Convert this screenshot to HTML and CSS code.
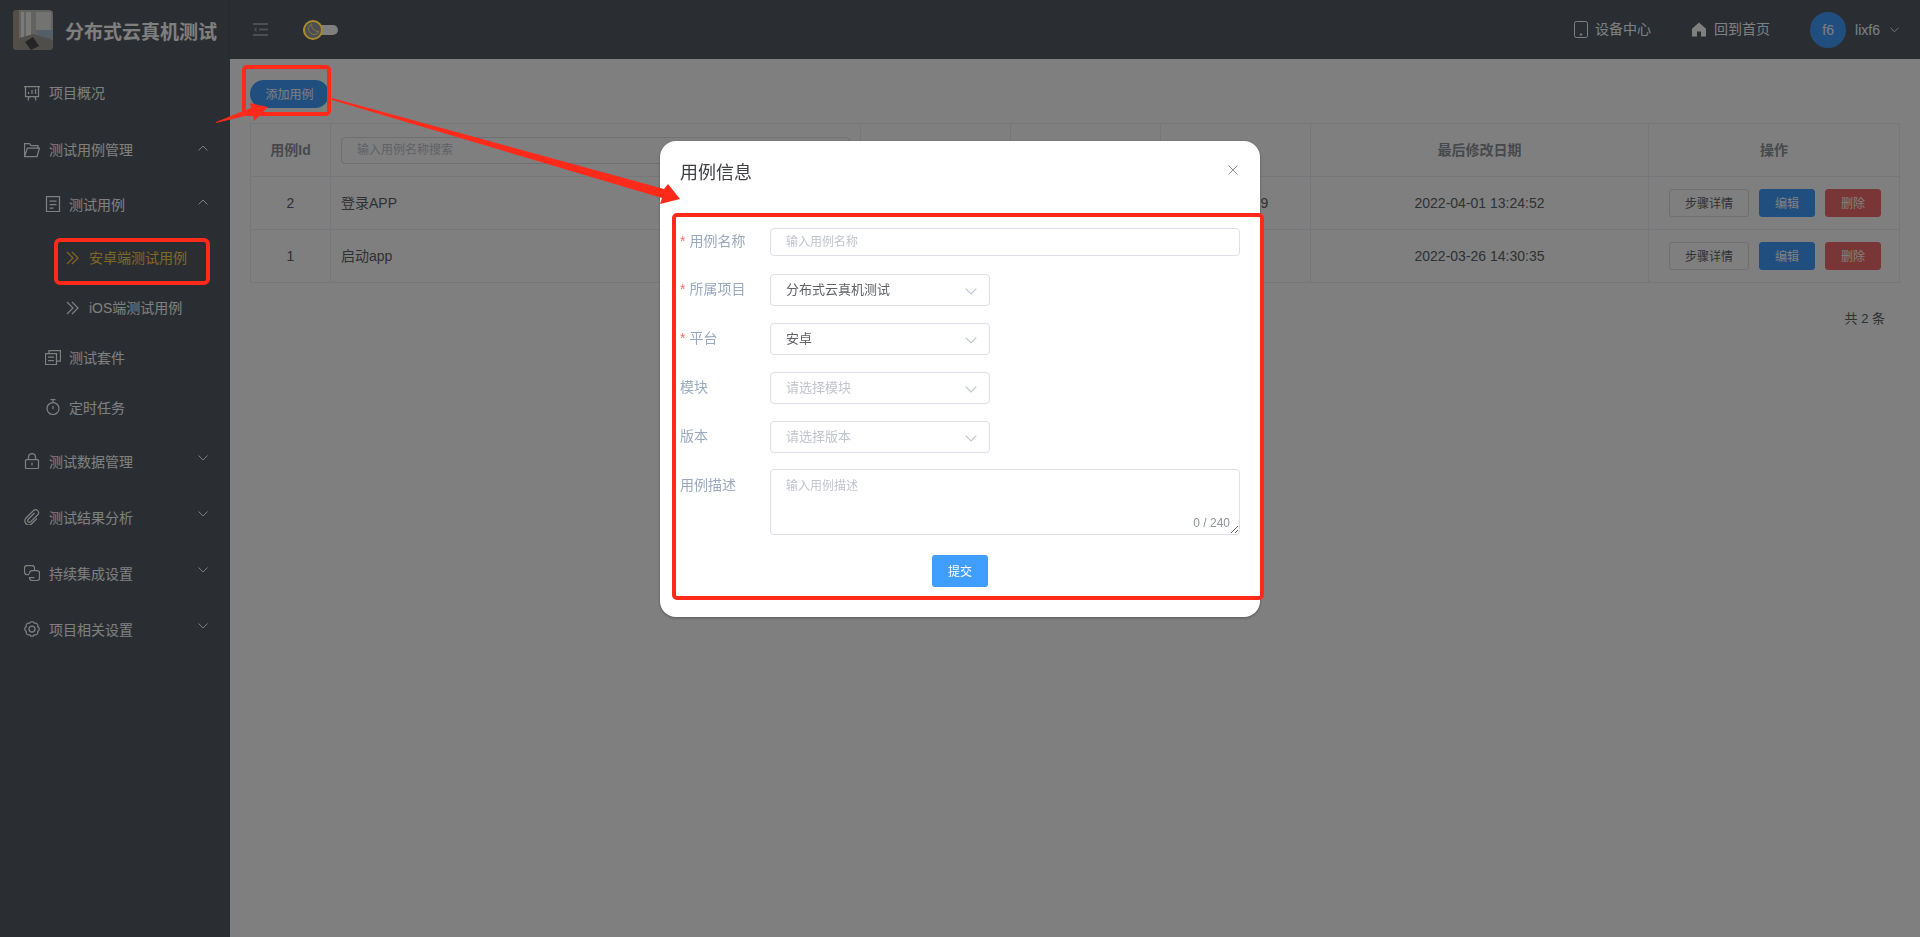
FILE: index.html
```html
<!DOCTYPE html>
<html lang="zh-CN">
<head>
  <meta charset="UTF-8">
  <title>安卓端测试用例</title>
  <link rel="stylesheet" href="styles.css">
</head>
<body>
  <svg class="sprite" xmlns="http://www.w3.org/2000/svg">
    <symbol id="i-up" viewBox="0 0 10 6"><path d="M.5 5.500 5 1l4.500 4.500" fill="none" stroke="currentColor"/></symbol>
    <symbol id="i-down" viewBox="0 0 10 6"><path d="M.5 .5 5 5 9.500 .5" fill="none" stroke="currentColor"/></symbol>
    <symbol id="i-darrow" viewBox="0 0 13 14"><path d="M1 1l6 6-6 6M6 1l6 6-6 6" fill="none" stroke="currentColor" stroke-width="1.2"/></symbol>
  </svg>

  <div class="app">
    <!-- Left menu -->
    <aside class="sidebar">
      <div class="brand">
        <svg class="logo" viewBox="0 0 40 40">
          <rect width="40" height="40" fill="#c4c4c0"/>
          <rect x="8" y="2" width="10" height="26" fill="#f4f4f0"/>
          <rect x="11" y="2" width="2" height="26" fill="#c8c8c4"/>
          <rect x="23" y="2" width="15" height="18" fill="#e6e6e2"/>
          <rect x="24" y="20" width="16" height="9" fill="#a8bcd0"/>
          <path d="M0 30 20 24 40 30V40H0Z" fill="#a09c94"/>
          <path d="M12 32 20 27 26 36 18 40Z" fill="#4a4a4a"/>
          <rect width="6" height="40" fill="#a89c8c"/>
        </svg>
        <span class="brand-name">分布式云真机测试</span>
      </div>

      <nav class="nav">
        <a class="nav-item lvl1">
          <svg class="icon" viewBox="0 0 16 16" fill="none" stroke="currentColor"><path d="M0 1.500h16M1.500 1.500v10h13v-10M5 11.500 4 15.500M11 11.500l1 4M4.500 9V7M8 9V5M11.500 9V4"/></svg>
          <span class="lift">项目概况</span>
        </a>

        <a class="nav-item lvl1">
          <svg class="icon" viewBox="0 0 16 14" fill="none" stroke="currentColor"><path d="M.5 13.500V.5h5l1.500 2h7v2.500M.5 13.500h12.500L15.500 5H3.500L.5 13.500Z"/></svg>
          <span class="lift">测试用例管理</span>
          <svg class="arrow"><use href="#i-up"/></svg>
        </a>
        <div class="submenu">
          <a class="nav-item lvl2">
            <svg class="icon" viewBox="0 0 14 16" fill="none" stroke="currentColor"><path d="M.5.500h13v15H.5ZM3.500 5h7M3.500 8.500h7M3.500 12h4"/></svg>
            <span>测试用例</span>
            <svg class="arrow"><use href="#i-up"/></svg>
          </a>
          <div class="subsub">
            <a class="nav-item lvl3 active">
              <svg class="icon-sm"><use href="#i-darrow"/></svg>
              <span>安卓端测试用例</span>
            </a>
            <a class="nav-item lvl3">
              <svg class="icon-sm"><use href="#i-darrow"/></svg>
              <span>iOS端测试用例</span>
            </a>
          </div>
          <a class="nav-item lvl2">
            <svg class="icon" viewBox="0 0 16 16" fill="none" stroke="currentColor"><path d="M.5 4.500h11v11H.5ZM4 4.500V1.500h11.500v10.500h-4M3 8h6M3 11.500h6"/></svg>
            <span>测试套件</span>
          </a>
          <a class="nav-item lvl2">
            <svg class="icon" viewBox="0 0 14 16" fill="none" stroke="currentColor"><circle cx="7" cy="9.500" r="6"/><path d="M4.500.5h5M7 .5v3M7 7v3"/></svg>
            <span>定时任务</span>
          </a>
        </div>

        <a class="nav-item lvl1">
          <svg class="icon" viewBox="0 0 14 16" fill="none" stroke="currentColor"><rect x=".5" y="6.500" width="13" height="9" rx="1"/><path d="M3.500 6.500V4a3.500 3.500 0 0 1 7 0v2.500M7 9.500v3"/></svg>
          <span>测试数据管理</span>
          <svg class="arrow low"><use href="#i-down"/></svg>
        </a>
        <a class="nav-item lvl1">
          <svg class="icon" viewBox="0 0 16 16" fill="none" stroke="currentColor"><path d="M10.500 4 4 10.500a1.800 1.800 0 0 0 2.500 2.500L14 5.500A3 3 0 0 0 9.800 1.300L2 9a4 4 0 0 0 5.700 5.700L13 9.500"/></svg>
          <span>测试结果分析</span>
          <svg class="arrow low"><use href="#i-down"/></svg>
        </a>
        <a class="nav-item lvl1">
          <svg class="icon" viewBox="0 0 16 16" fill="none" stroke="currentColor"><path d="M5 9.500H3A2.500 2.500 0 0 1 .5 7V3A2.500 2.500 0 0 1 3 .5h5A2.500 2.500 0 0 1 10.500 3v2"/><path d="M5.500 9V8A2.500 2.500 0 0 1 8 5.500h5A2.500 2.500 0 0 1 15.500 8v5a2.500 2.500 0 0 1-2.500 2.500H8A2.500 2.500 0 0 1 5.500 13v-.5h5"/></svg>
          <span>持续集成设置</span>
          <svg class="arrow low"><use href="#i-down"/></svg>
        </a>
        <a class="nav-item lvl1">
          <svg class="icon" viewBox="0 0 16 16" fill="none" stroke="currentColor"><path d="M5.630 2.270A2.600 2.600 0 0 1 10.370 2.270A2.600 2.600 0 0 1 13.730 5.630A2.600 2.600 0 0 1 13.730 10.370A2.600 2.600 0 0 1 10.370 13.730A2.600 2.600 0 0 1 5.630 13.730A2.600 2.600 0 0 1 2.270 10.370A2.600 2.600 0 0 1 2.270 5.630A2.600 2.600 0 0 1 5.630 2.270Z"/><circle cx="8" cy="8" r="3"/></svg>
          <span>项目相关设置</span>
          <svg class="arrow low"><use href="#i-down"/></svg>
        </a>
      </nav>
    </aside>

    <div class="content">
      <!-- Top bar -->
      <header class="topbar">
        <svg class="fold" viewBox="0 0 15 13" fill="none" stroke="currentColor" stroke-width="2"><path d="M0 1h15M6 6.500h9M0 12h15"/><path d="M3.500 4 .8 6.500l2.700 2.500z" fill="currentColor" stroke="none"/></svg>
        <div class="theme-switch">
          <span class="switch-knob">
            <svg viewBox="0 0 14 14" fill="none" stroke="currentColor"><path d="M5 1a6 6 0 1 0 8 8A7 7 0 0 1 5 1Z"/></svg>
          </span>
        </div>
        <div class="topbar-right">
          <a class="top-link">
            <svg class="top-icon" viewBox="0 0 14 17" fill="none" stroke="currentColor"><rect x=".5" y=".5" width="13" height="16" rx="2"/><circle cx="7" cy="13.500" r=".8" fill="currentColor"/></svg>
            <span>设备中心</span>
          </a>
          <a class="top-link">
            <svg class="top-icon" viewBox="0 0 14 14" fill="currentColor"><path d="M7 0 14 6.200V14H9V9H5v5H0V6.200Z"/></svg>
            <span>回到首页</span>
          </a>
          <div class="user">
            <span class="avatar">f6</span>
            <span class="user-name">lixf6</span>
            <svg class="user-arrow"><use href="#i-down"/></svg>
          </div>
        </div>
      </header>

      <!-- Case list -->
      <main class="main">
        <button class="add-btn">添加用例</button>
        <table class="case-table">
          <colgroup>
            <col class="col-id"><col class="col-name"><col class="col-mid"><col class="col-mid"><col class="col-mid"><col class="col-date"><col class="col-ops">
          </colgroup>
          <thead>
            <tr>
              <th>用例Id</th>
              <th class="search-cell"><input class="search" type="text" placeholder="输入用例名称搜索"></th>
              <th></th>
              <th></th>
              <th></th>
              <th>最后修改日期</th>
              <th>操作</th>
            </tr>
          </thead>
          <tbody>
            <tr>
              <td>2</td>
              <td class="left">登录APP</td>
              <td></td>
              <td></td>
              <td class="cut">2022-03-29</td>
              <td>2022-04-01 13:24:52</td>
              <td class="ops"><button class="btn">步骤详情</button><button class="btn blue">编辑</button><button class="btn red">删除</button></td>
            </tr>
            <tr>
              <td>1</td>
              <td class="left">启动app</td>
              <td></td>
              <td></td>
              <td></td>
              <td>2022-03-26 14:30:35</td>
              <td class="ops"><button class="btn">步骤详情</button><button class="btn blue">编辑</button><button class="btn red">删除</button></td>
            </tr>
          </tbody>
        </table>
        <div class="pager">共 2 条</div>
      </main>
    </div>
  </div>

  <!-- Dialog -->
  <div class="mask">
    <div class="dialog">
      <div class="dialog-head">
        <span class="dialog-title">用例信息</span>
        <svg class="dialog-close" viewBox="0 0 10 10" fill="none" stroke="currentColor"><path d="M.5.500l9 9M9.500.500l-9 9"/></svg>
      </div>
      <form class="form">
        <div class="form-row row-name">
          <label class="form-label required">用例名称</label>
          <input class="field field-full" type="text" placeholder="输入用例名称">
        </div>
        <div class="form-row">
          <label class="form-label required">所属项目</label>
          <div class="select"><span>分布式云真机测试</span><svg class="select-arrow"><use href="#i-down"/></svg></div>
        </div>
        <div class="form-row">
          <label class="form-label required">平台</label>
          <div class="select"><span>安卓</span><svg class="select-arrow"><use href="#i-down"/></svg></div>
        </div>
        <div class="form-row">
          <label class="form-label">模块</label>
          <div class="select empty"><span>请选择模块</span><svg class="select-arrow"><use href="#i-down"/></svg></div>
        </div>
        <div class="form-row row-version">
          <label class="form-label">版本</label>
          <div class="select empty"><span>请选择版本</span><svg class="select-arrow"><use href="#i-down"/></svg></div>
        </div>
        <div class="form-row row-desc">
          <label class="form-label">用例描述</label>
          <div class="area-wrap">
            <textarea class="area" placeholder="输入用例描述"></textarea>
            <span class="count">0 / 240</span>
          </div>
        </div>
        <div class="form-foot"><button class="submit" type="button">提交</button></div>
      </form>
    </div>
  </div>

  <!-- Red annotations drawn over the screenshot -->
  <svg class="marks" viewBox="0 0 1920 937" xmlns="http://www.w3.org/2000/svg">
    <g fill="none" stroke="#ff2a1a" stroke-width="4">
      <rect x="244" y="67" width="85" height="47" rx="3"/>
      <rect x="56" y="240" width="152" height="43" rx="4"/>
      <rect x="674" y="215" width="588" height="383" rx="3"/>
    </g>
    <g fill="#ff2a1a">
      <polygon points="216,122 251,108 250,103 268,107 254,121 253,114 216,123"/>
      <polygon points="332,98 664,189 668,184 680,199 660,204 662,198 332,100"/>
    </g>
  </svg>
</body>
</html>
```

FILE: styles.css
```css
* {
  box-sizing: border-box;
}

html, body {
  margin: 0;
  height: 100%;
  overflow: hidden;
}

body {
  font-family: "Liberation Sans", "Noto Sans CJK SC", sans-serif;
  font-size: 14px;
  color: #606266;
  background: #fff;
}

.sprite {
  display: none;
}

.app {
  display: flex;
  height: 100vh;
}

/* sidebar */
.sidebar {
  width: 230px;
  flex-shrink: 0;
  background: #545c64;
  color: #fff;
}

.brand {
  display: flex;
  align-items: center;
  height: 59px;
  padding: 1px 0 0 13px;
  border-right: 1px solid #4c535b;
}

.logo {
  width: 40px;
  height: 40px;
  border-radius: 4px;
  flex-shrink: 0;
}

.brand-name {
  margin-left: 12px;
  font-size: 19px;
  font-weight: bold;
  white-space: nowrap;
}

.nav {
  padding-top: 6px;
}

.nav-item {
  display: flex;
  align-items: center;
  color: #fff;
}

.lift {
  padding-bottom: 2px;
}

.lvl1 {
  height: 56px;
  padding-left: 24px;
}

.nav > .nav-item:first-child {
  margin-bottom: 1px;
}

.lvl1 .icon {
  margin-right: 9px;
}

.lvl2 {
  height: 50px;
  padding-left: 45px;
}

.lvl2 .icon {
  margin-right: 8px;
}

.lvl3 {
  height: 50px;
  padding-left: 66px;
}

.lvl3.active {
  color: #ffd04b;
}

.icon {
  width: 16px;
  height: 16px;
  flex-shrink: 0;
  stroke-width: 1.25;
}

.icon-sm {
  width: 13px;
  height: 14px;
  margin-right: 10px;
  flex-shrink: 0;
  transform: translateY(1px);
}

.arrow {
  width: 10px;
  height: 6px;
  margin-left: auto;
  margin-right: 22px;
  margin-bottom: 5px;
}

.arrow.low {
  margin-bottom: 7px;
}

.submenu {
  padding: 1px 0;
}

.subsub {
  padding-top: 3px;
}

/* top bar */
.content {
  flex: 1;
  min-width: 0;
  display: flex;
  flex-direction: column;
}

.topbar {
  display: flex;
  align-items: center;
  height: 59px;
  padding-left: 23px;
  background: #545c64;
  color: #fff;
}

.fold {
  width: 15px;
  height: 13px;
  color: #9a9ea3;
}

.theme-switch {
  position: relative;
  width: 35px;
  height: 10px;
  margin-left: 35px;
  background: #fff;
  border-radius: 5px;
}

/* knob stays lit above the mask */
.switch-knob {
  position: absolute;
  z-index: 2;
  left: 0;
  top: -5px;
  width: 20px;
  height: 20px;
  display: flex;
  align-items: center;
  justify-content: center;
  background: #4c4f52;
  border: 2px solid #a58a2e;
  border-radius: 50%;
  color: #85763f;
}

.switch-knob svg {
  width: 13px;
  height: 13px;
}

.topbar-right {
  margin-left: auto;
  display: flex;
  align-items: center;
  padding-right: 21px;
}

.top-link {
  display: flex;
  align-items: center;
  margin-right: 42px;
}

.top-link:first-child {
  margin-right: 41px;
}

.top-link:first-child .top-icon {
  margin-right: 7px;
}

.top-link span {
  padding-bottom: 3px;
}

.top-icon {
  width: 14px;
  height: 17px;
  margin-right: 8px;
}

.user {
  display: flex;
  align-items: center;
  margin-left: -2px;
}

.avatar {
  width: 36px;
  height: 36px;
  border-radius: 50%;
  background: #409eff;
  display: flex;
  align-items: center;
  justify-content: center;
}

.user-name {
  margin-left: 9px;
}

.user-arrow {
  width: 9px;
  height: 6px;
  margin-left: 10px;
}

/* list page */
.main {
  flex: 1;
  padding: 21px 20px 0;
}

.add-btn {
  display: block;
  width: 79px;
  height: 28px;
  padding: 0 0 2px;
  border: none;
  border-radius: 14px;
  background: #409eff;
  color: #fff;
  font: inherit;
  font-size: 12px;
}

.case-table {
  width: 1649px;
  margin-top: 15px;
  border-collapse: collapse;
  table-layout: fixed;
}

.col-id { width: 80px; }
.col-name { width: 530px; }
.col-mid { width: 150px; }
.col-date { width: 338px; }
.col-ops { width: 251px; }

.case-table th,
.case-table td {
  height: 53px;
  padding: 0;
  border: 1px solid #ebeef5;
  text-align: center;
  font-size: 14px;
}

.case-table th {
  padding-bottom: 2px;
  color: #909399;
  font-weight: bold;
}

.case-table td.left {
  text-align: left;
  padding: 0 0 2px 10px;
}

.case-table td.cut {
  padding-right: 6px;
}

.case-table td.ops {
  padding-left: 2px;
}

.case-table th.search-cell {
  text-align: left;
  padding: 0 10px;
}

.search {
  display: block;
  width: 100%;
  height: 27px;
  padding: 0 15px;
  border: 1px solid #dcdfe6;
  border-radius: 4px;
  font: inherit;
  font-size: 12px;
  font-weight: normal;
  background: transparent;
  outline: none;
}

.search::placeholder,
.field::placeholder,
.area::placeholder {
  color: #c0c4cc;
  opacity: 1;
}

.btn {
  width: 56px;
  height: 28px;
  margin-left: 10px;
  padding: 0 0 2px;
  border: 1px solid #dcdfe6;
  border-radius: 3px;
  background: #fff;
  color: #606266;
  font: inherit;
  font-size: 12px;
}

.btn:first-child {
  width: 80px;
  margin-left: 0;
}

.btn.blue {
  background: #409eff;
  border-color: #409eff;
  color: #fff;
}

.btn.red {
  background: #f56c6c;
  border-color: #f56c6c;
  color: #fff;
}

.pager {
  margin-top: 27px;
  padding-right: 15px;
  text-align: right;
  font-size: 13px;
  line-height: 18px;
  color: #606266;
}

/* dialog */
.mask {
  position: fixed;
  inset: 0;
  display: flex;
  justify-content: center;
  align-items: flex-start;
  background: rgba(0, 0, 0, .5);
}

.dialog {
  width: 600px;
  margin-top: 141px;
  padding: 0 20px 30px;
  background: #fff;
  border-radius: 16px;
  box-shadow: 0 1px 3px rgba(0, 0, 0, .3);
}

.dialog-head {
  display: flex;
  align-items: flex-start;
  justify-content: space-between;
  height: 87px;
  padding-top: 20px;
}

.dialog-title {
  font-size: 18px;
  line-height: 24px;
  color: #3f4144;
}

.dialog-close {
  width: 10px;
  height: 10px;
  margin: 4px 2px 0 0;
  color: #909399;
}

.form-row {
  display: flex;
  align-items: flex-start;
  margin-bottom: 17px;
}

.form-row.row-name {
  margin-bottom: 18px;
}

.form-row.row-version {
  margin-bottom: 16px;
}

.form-label {
  width: 90px;
  flex-shrink: 0;
  line-height: 30px;
  color: #99a9bf;
  font-size: 14px;
}

.row-name .form-label {
  line-height: 26px;
}

.row-desc .form-label {
  line-height: 32px;
}

.form-label.required::before {
  content: "*";
  color: #f56c6c;
  margin-right: 4px;
}

.field {
  height: 28px;
  padding: 0 15px;
  border: 1px solid #dcdfe6;
  border-radius: 4px;
  font: inherit;
  font-size: 12px;
  outline: none;
}

.field-full {
  flex: 1;
  min-width: 0;
}

.select {
  display: flex;
  align-items: center;
  justify-content: space-between;
  width: 220px;
  height: 32px;
  padding: 0 12px 0 15px;
  border: 1px solid #dcdfe6;
  border-radius: 4px;
  font-size: 13px;
  color: #606266;
}

.select span {
  padding-bottom: 4px;
}

.select.empty {
  color: #c0c4cc;
}

.select-arrow {
  width: 12px;
  height: 7px;
  color: #c0c4cc;
  transform: translateY(1px);
}

.area-wrap {
  position: relative;
  flex: 1;
  min-width: 0;
  height: 66px;
}

.area {
  display: block;
  width: 100%;
  height: 100%;
  padding: 8px 15px;
  border: 1px solid #dcdfe6;
  border-radius: 4px;
  font: inherit;
  font-size: 12px;
  line-height: 16px;
  outline: none;
}

.count {
  position: absolute;
  right: 10px;
  bottom: 5px;
  font-size: 12px;
  line-height: 14px;
  color: #909399;
}

.form-foot {
  display: flex;
  justify-content: center;
  margin-top: 20px;
}

.submit {
  width: 56px;
  height: 32px;
  padding: 0 0 2px;
  border: none;
  border-radius: 3px;
  background: #409eff;
  color: #fff;
  font: inherit;
  font-size: 12px;
}

/* annotations */
.marks {
  position: fixed;
  left: 0;
  top: 0;
  width: 1920px;
  height: 937px;
  pointer-events: none;
}
```
